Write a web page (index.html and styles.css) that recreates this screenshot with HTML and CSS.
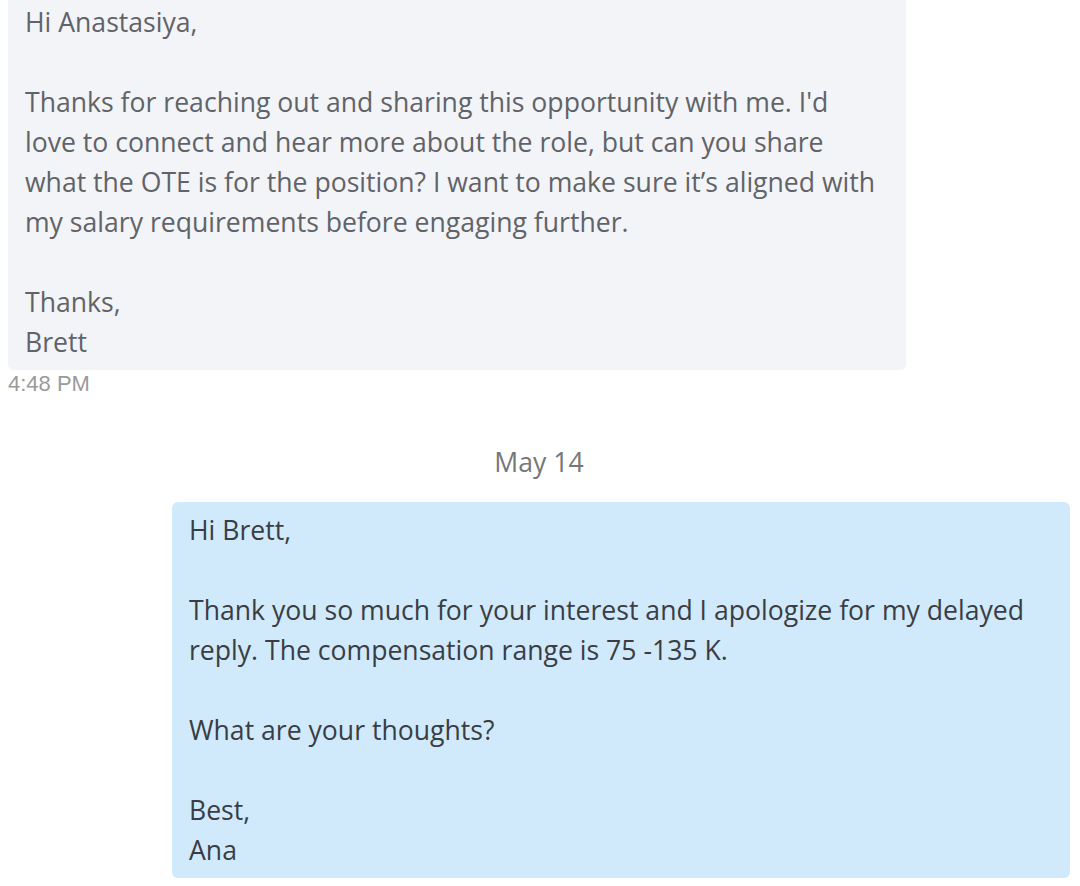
FILE: index.html
```html
<!DOCTYPE html>
<html>
<head>
<meta charset="utf-8">
<link rel="stylesheet" href="styles.css">
</head>
<body>
<div class="chat">
  <div class="msg msg-in">
    <div class="bubble bubble-in">
      <p>Hi Anastasiya,</p>
      <p>&nbsp;</p>
      <p>Thanks for reaching out and sharing this opportunity with me. I'd<br>love to connect and hear more about the role, but can you share<br>what the OTE is for the position? I want to make sure it’s aligned with<br>my salary requirements before engaging further.</p>
      <p>&nbsp;</p>
      <p>Thanks,</p>
      <p>Brett</p>
    </div>
    <div class="time">4:48 PM</div>
  </div>
  <div class="date">May 14</div>
  <div class="msg msg-out">
    <div class="bubble bubble-out">
      <p>Hi Brett,</p>
      <p>&nbsp;</p>
      <p>Thank you so much for your interest and I apologize for my delayed<br>reply. The compensation range is 75 -135 K.</p>
      <p>&nbsp;</p>
      <p>What are your thoughts?</p>
      <p>&nbsp;</p>
      <p>Best,</p>
      <p>Ana</p>
    </div>
  </div>
</div>
</body>
</html>
```
FILE: styles.css
```css
html, body {
  margin: 0;
  padding: 0;
  background: #ffffff;
}
.chat {
  display: flex;
  flex-direction: column;
  padding: 0 10px 0 8px;
  margin-top: -6px;
  font-family: "Open Sans", "Noto Sans", sans-serif;
  font-size: 26.6px;
  line-height: 40px;
}
.msg {
  display: flex;
  flex-direction: column;
}
.msg-in { align-items: flex-start; }
.msg-out { align-items: flex-end; }
.bubble {
  width: 898px;
  box-sizing: border-box;
  padding: 8px 17px;
  border-radius: 6px;
  white-space: nowrap;
}
.bubble p { margin: 0; }
.bubble-in {
  background: #f3f4f7;
  color: #606368;
}
.bubble-out {
  background: #d0eafb;
  color: #3a3d44;
}
.time {
  font-family: "Liberation Sans", Arial, sans-serif;
  font-size: 22px;
  line-height: 28px;
  color: #9a9a9a;
  margin-top: 0;
}
.date {
  text-align: center;
  color: #76777a;
  margin: 44px 0 20px;
}
```
